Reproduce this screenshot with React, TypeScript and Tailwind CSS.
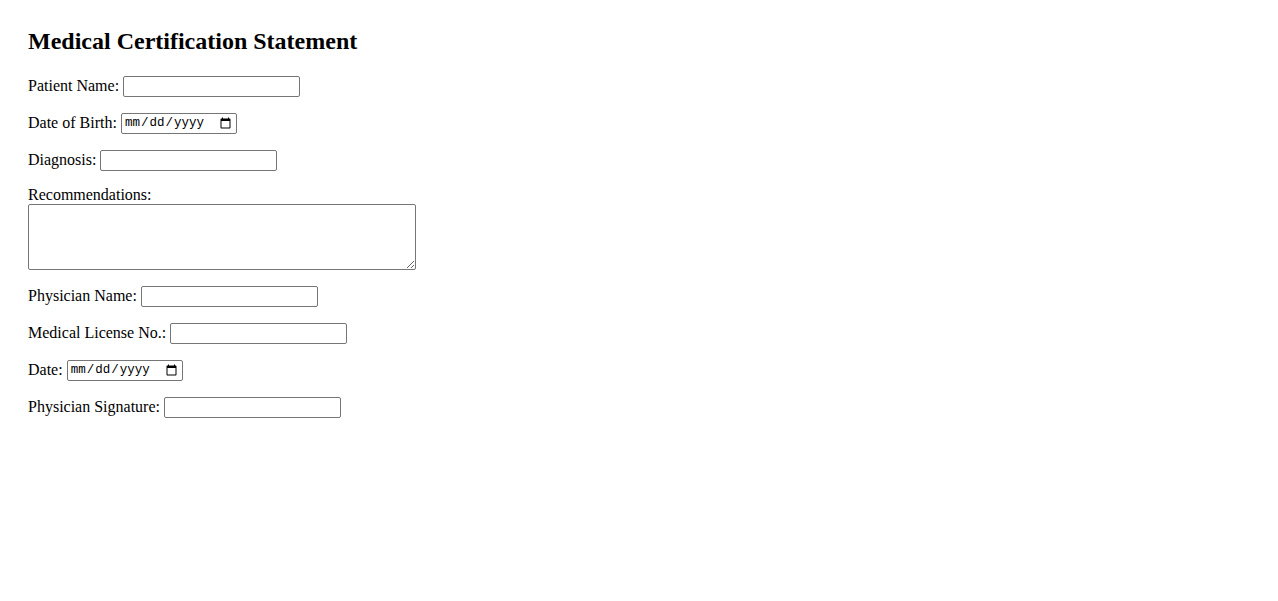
const serif = { fontFamily: '"Liberation Serif", "Times New Roman", serif' };

const textInput =
  'w-[177px] h-[21px] border border-[#767676] rounded-[2px] bg-white px-[2px] text-[13.33px] outline-none';
const dateInput =
  'w-[116px] h-[21px] border border-[#767676] rounded-[2px] bg-white pl-[2px] pr-[2px] text-[12.5px] text-black font-["Liberation_Mono",monospace] outline-none';

function Row({ label, children }: { label: string; children: React.ReactNode }) {
  return (
    <div className="flex items-center h-[22px] mb-[15px] gap-[4px]">
      <label className="text-[16px] leading-none">{label}</label>
      {children}
    </div>
  );
}

export default function App() {
  return (
    <div
      className="min-h-[601px] bg-white text-black pl-[28px] pt-[28px] font-['Liberation_Serif',serif]"
      style={serif}
    >
      <h2 className="text-[24px] font-bold leading-[27px] mb-[20px]">Medical Certification Statement</h2>
      <form>
        <Row label="Patient Name:">
          <input type="text" className={textInput} />
        </Row>
        <Row label="Date of Birth:">
          <input type="date" className={dateInput} />
        </Row>
        <Row label="Diagnosis:">
          <input type="text" className={textInput} />
        </Row>
        <div className="mb-[15px]">
          <label className="block text-[16px] leading-[18px]">Recommendations:</label>
          <textarea className="block w-[388px] h-[66px] border border-[#767676] rounded-[2px] bg-white p-[2px] text-[13.33px] outline-none resize" />
        </div>
        <Row label="Physician Name:">
          <input type="text" className={textInput} />
        </Row>
        <Row label="Medical License No.:">
          <input type="text" className={textInput} />
        </Row>
        <Row label="Date:">
          <input type="date" className={dateInput} />
        </Row>
        <Row label="Physician Signature:">
          <input type="text" className={textInput} />
        </Row>
      </form>
    </div>
  );
}
